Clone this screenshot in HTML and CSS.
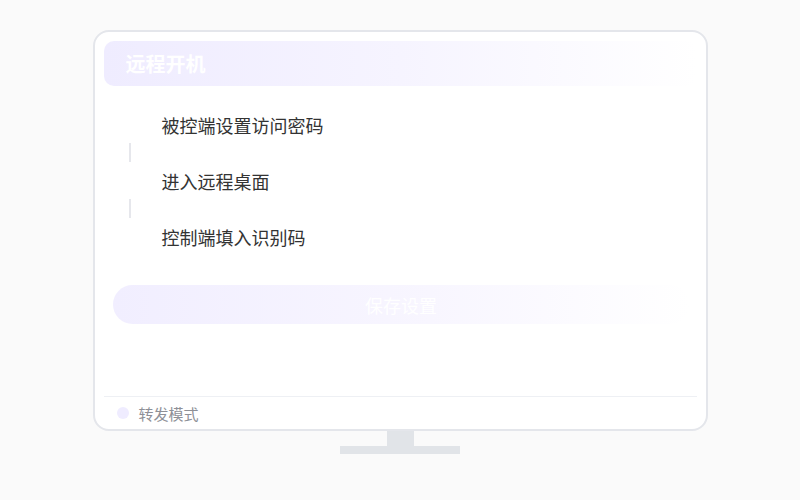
FILE: index.html
```html
<!DOCTYPE html>
<html lang="zh-CN">

<head>
    <meta charset="UTF-8">
    <meta name="viewport" content="width=device-width, initial-scale=1">
    <title>远程开机</title>
    <link rel="stylesheet" href="styles.css">
</head>

<body>
    <div class="monitor">
        <div class="screen">
            <div class="header">
                <h1>远程开机</h1>
            </div>

            <div class="steps">
                <div class="step">被控端设置访问密码</div>
                <div class="connector"></div>
                <div class="step">进入远程桌面</div>
                <div class="connector"></div>
                <div class="step">控制端填入识别码</div>
            </div>

            <button class="save-btn">保存设置</button>

            <div class="footer">
                <span class="dot"></span>
                <span class="mode">转发模式</span>
            </div>
        </div>
        <div class="neck"></div>
        <div class="base"></div>
    </div>
</body>

</html>
```

FILE: styles.css
```css
body {
    margin: 0;
    background-color: #fafafa;
    font-family: "Noto Sans CJK SC", "Noto Sans", sans-serif;
}

.monitor {
    display: flex;
    flex-direction: column;
    align-items: center;
    padding-top: 30px;
}

.screen {
    width: 615px;
    height: 401px;
    box-sizing: border-box;
    padding: 9px 9px 0 9px;
    background-color: #fff;
    border: 2px solid #e4e6eb;
    border-radius: 16px;
    display: flex;
    flex-direction: column;
}

.header {
    height: 45px;
    border-radius: 10px;
    background: linear-gradient(90deg, #efecff 0%, #f6f4ff 50%, rgba(255, 255, 255, 0) 100%);
    display: flex;
    align-items: center;
    padding-left: 22px;
}

.header h1 {
    margin: 0;
    font-size: 20px;
    font-weight: 700;
    color: #fff;
}

.steps {
    margin-top: 28px;
}

.step {
    padding-left: 58px;
    font-size: 18px;
    line-height: 22px;
    color: #333;
}

.connector {
    width: 2px;
    height: 19px;
    margin: 7px 0 8px 25px;
    background-color: #e6e7ec;
}

.save-btn {
    margin: 37px 0 0 9px;
    width: 577px;
    height: 39px;
    border: none;
    border-radius: 20px;
    background: linear-gradient(90deg, #f1eeff 0%, #f8f6ff 55%, rgba(255, 255, 255, 0) 100%);
    color: #fff;
    font-family: inherit;
    font-size: 18px;
    cursor: pointer;
}

.footer {
    margin-top: auto;
    height: 32px;
    border-top: 1px solid #eef0f4;
    display: flex;
    align-items: center;
    padding-left: 13px;
}

.dot {
    width: 12px;
    height: 12px;
    border-radius: 50%;
    background-color: #efecff;
    margin-right: 10px;
}

.mode {
    font-size: 15px;
    color: #8e9097;
}

.neck {
    width: 27px;
    height: 15px;
    background-color: #e1e4e8;
}

.base {
    width: 120px;
    height: 8px;
    background-color: #e1e4e8;
}
```
